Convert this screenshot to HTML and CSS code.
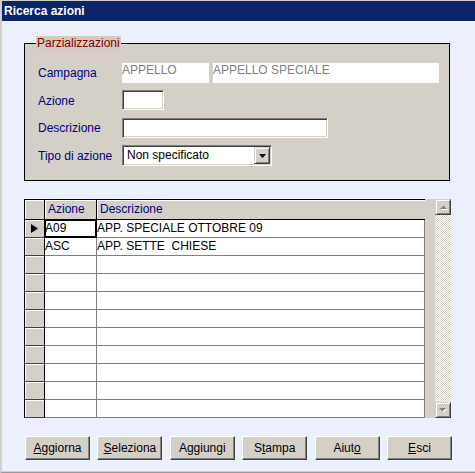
FILE: index.html
```html
<!DOCTYPE html>
<html lang="it">
<head>
<meta charset="utf-8">
<title>Ricerca azioni</title>
<link rel="stylesheet" href="styles.css">
</head>
<body>
<div class="window">
  <div class="titlebar">Ricerca azioni</div>
  <div class="client">
    <fieldset class="group">
      <legend>Parzializzazioni</legend>
      <div class="form">
        <span class="lbl">Campagna</span>
        <div class="pair">
          <div class="ro ro-code">APPELLO</div>
          <div class="ro ro-name">APPELLO SPECIALE</div>
        </div>
        <span class="lbl">Azione</span>
        <div class="field f-azione"></div>
        <span class="lbl">Descrizione</span>
        <div class="field f-desc"></div>
        <span class="lbl">Tipo di azione</span>
        <div class="field combo">
          <span class="combo-text">Non specificato</span>
          <span class="combo-btn"><svg width="7" height="4" viewBox="0 0 7 4"><polygon points="0,0 7,0 3.5,4" fill="#000"/></svg></span>
        </div>
      </div>
    </fieldset>

    <div class="grid">
      <div class="table">
        <div class="hcell hind"></div><div class="hcell">Azione</div><div class="hcell hlast">Descrizione</div>

        <div class="ind cur"><svg width="7" height="9" viewBox="0 0 7 9"><polygon points="0,0 7,4.5 0,9" fill="#000"/></svg></div><div class="cell focus">A09</div><div class="cell">APP. SPECIALE OTTOBRE 09</div>
        <div class="ind"></div><div class="cell">ASC</div><div class="cell">APP. SETTE&nbsp; CHIESE</div>
        <div class="ind"></div><div class="cell"></div><div class="cell"></div>
        <div class="ind"></div><div class="cell"></div><div class="cell"></div>
        <div class="ind"></div><div class="cell"></div><div class="cell"></div>
        <div class="ind"></div><div class="cell"></div><div class="cell"></div>
        <div class="ind"></div><div class="cell"></div><div class="cell"></div>
        <div class="ind"></div><div class="cell"></div><div class="cell"></div>
        <div class="ind"></div><div class="cell"></div><div class="cell"></div>
        <div class="ind"></div><div class="cell"></div><div class="cell"></div>
        <div class="ind"></div><div class="cell"></div><div class="cell"></div>
      </div>
      <div class="gutter"></div>
      <div class="vscroll">
        <span class="sbtn"><svg width="14" height="14" viewBox="0 0 14 14"><polygon points="4,9 11,9 7.5,5.5" fill="#fff" transform="translate(1,1)"/><polygon points="4,9 11,9 7.5,5.5" fill="#808080"/></svg></span>
        <span class="sbtn"><svg width="14" height="14" viewBox="0 0 14 14"><polygon points="3,5 10,5 6.5,8.5" fill="#fff" transform="translate(1,1)"/><polygon points="3,5 10,5 6.5,8.5" fill="#808080"/></svg></span>
      </div>
    </div>

    <div class="buttons">
      <button class="btn"><u>A</u>ggiorna</button>
      <button class="btn"><u>S</u>eleziona</button>
      <button class="btn">Aggiungi</button>
      <button class="btn">S<u>t</u>ampa</button>
      <button class="btn">Aiut<u>o</u></button>
      <button class="btn"><u>E</u>sci</button>
    </div>
  </div>
</div>
</body>
</html>
```

FILE: styles.css
```css
* { box-sizing: border-box; }
html, body { margin: 0; padding: 0; }
body {
  width: 475px;
  height: 473px;
  overflow: hidden;
  background: #d4d0c8;
  font-family: "Liberation Sans", Arial, sans-serif;
  font-size: 12px;
}

.window {
  width: 475px;
  height: 473px;
  display: flex;
  flex-direction: column;
  border-top: 1px solid #d4d0c8;
  border-left: 2px solid #d4d0c8;
  border-bottom: 1px solid #9c9a94;
  background: #eceffc;
}

.titlebar {
  height: 20px;
  flex: none;
  background: #0a246a;
  color: #fff;
  font-weight: bold;
  font-size: 12px;
  line-height: 20px;
  padding-left: 2px;
}

.client {
  flex: 1;
  display: flex;
  flex-direction: column;
  align-items: flex-start;
  background: #eceffc;
  border-bottom: 1px solid #d4d0c8;
}

/* group box */
.group {
  width: 426px;
  margin: 15px 0 0 22px;
  padding: 0;
  min-width: 0;
  border: 1px solid #000;
  background: #d4d0c8;
}
.group legend {
  margin-left: 11px;
  padding: 0 1px;
  line-height: 14px;
  color: #800000;
  background: #d9c9bd;
}

.form {
  display: grid;
  grid-template-columns: 84px auto;
  grid-template-rows: 20px 21px 20px 21px;
  row-gap: 7px;
  padding: 13px 0 14px 13px;
  align-items: start;
}
.lbl {
  align-self: center;
  color: #000080;
  line-height: 14px;
  white-space: nowrap;
}

.pair { display: flex; gap: 4px; }
.ro {
  height: 20px;
  background: #fff;
  color: #808080;
  line-height: 15px;
  white-space: nowrap;
}
.ro-code { width: 87px; }
.ro-name { width: 226px; }

.field {
  height: 20px;
  background: #fff;
  border: 1px solid;
  border-color: #808080 #fff #fff #808080;
  box-shadow: inset 1px 1px #404040, inset -1px -1px #d4d0c8;
}
.f-azione { width: 42px; }
.f-desc { width: 206px; }

.combo {
  width: 150px;
  height: 21px;
  display: flex;
  padding: 1px;
}
.combo-text {
  flex: 1;
  padding-left: 3px;
  line-height: 17px;
  color: #000;
}
.combo-btn {
  width: 16px;
  height: 17px;
  display: flex;
  align-items: center;
  justify-content: center;
  background: #d4d0c8;
  border: 1px solid;
  border-color: #d4d0c8 #404040 #404040 #d4d0c8;
  box-shadow: inset 1px 1px #fff, inset -1px -1px #808080;
}

/* data grid */
.grid {
  display: flex;
  margin: 18px 0 0 22px;
  height: 219px;
}
.table {
  width: 401px;
  display: grid;
  grid-template-columns: 20px 52px 1fr;
  grid-template-rows: 20px repeat(11, 18px);
  border-top: 1px solid #000;
  border-left: 1px solid #000;
  background: #fff;
}
.hcell {
  background: #d4d0c8;
  color: #000080;
  line-height: 19px;
  padding-left: 3px;
  border-right: 1px solid #000;
  border-bottom: 1px solid #000;
  box-shadow: inset 1px 1px #fff;
  white-space: nowrap;
}
.hlast { border-right: none; }
.ind {
  background: #d4d0c8;
  border-right: 1px solid #000;
  border-bottom: 1px solid #404040;
  box-shadow: inset 1px 1px #fff;
  display: flex;
  align-items: center;
  justify-content: center;
}
.cell {
  border-right: 1px solid #808080;
  border-bottom: 1px solid #808080;
  line-height: 17px;
  color: #000;
  white-space: nowrap;
  overflow: hidden;
}
.cell.focus {
  border-right-color: #000;
  border-bottom-color: #000;
  box-shadow: inset -1px -1px #000, inset 1px 1px #000;
}

.gutter {
  width: 10px;
  background: #d4d0c8;
}
.vscroll {
  width: 16px;
  display: flex;
  flex-direction: column;
  justify-content: space-between;
  background-color: #fff;
  background-image: repeating-conic-gradient(#fff 0 25%, #d4d0c8 0 50%);
  background-size: 2px 2px;
}
.sbtn {
  width: 16px;
  height: 16px;
  display: block;
  background: #d4d0c8;
  border: 1px solid;
  border-color: #d4d0c8 #404040 #404040 #d4d0c8;
  box-shadow: inset 1px 1px #fff, inset -1px -1px #808080;
}
.sbtn svg { display: block; }

/* buttons */
.buttons {
  display: flex;
  gap: 7.4px;
  margin: 18px 0 0 23px;
}
.btn {
  width: 65px;
  height: 24px;
  padding: 0;
  background: #d4d0c8;
  border: 1px solid;
  border-color: #fff #404040 #404040 #fff;
  box-shadow: inset -1px -1px #808080;
  font-family: "Liberation Sans", Arial, sans-serif;
  font-size: 12px;
  color: #000;
  text-align: center;
  line-height: 20px;
}
```
